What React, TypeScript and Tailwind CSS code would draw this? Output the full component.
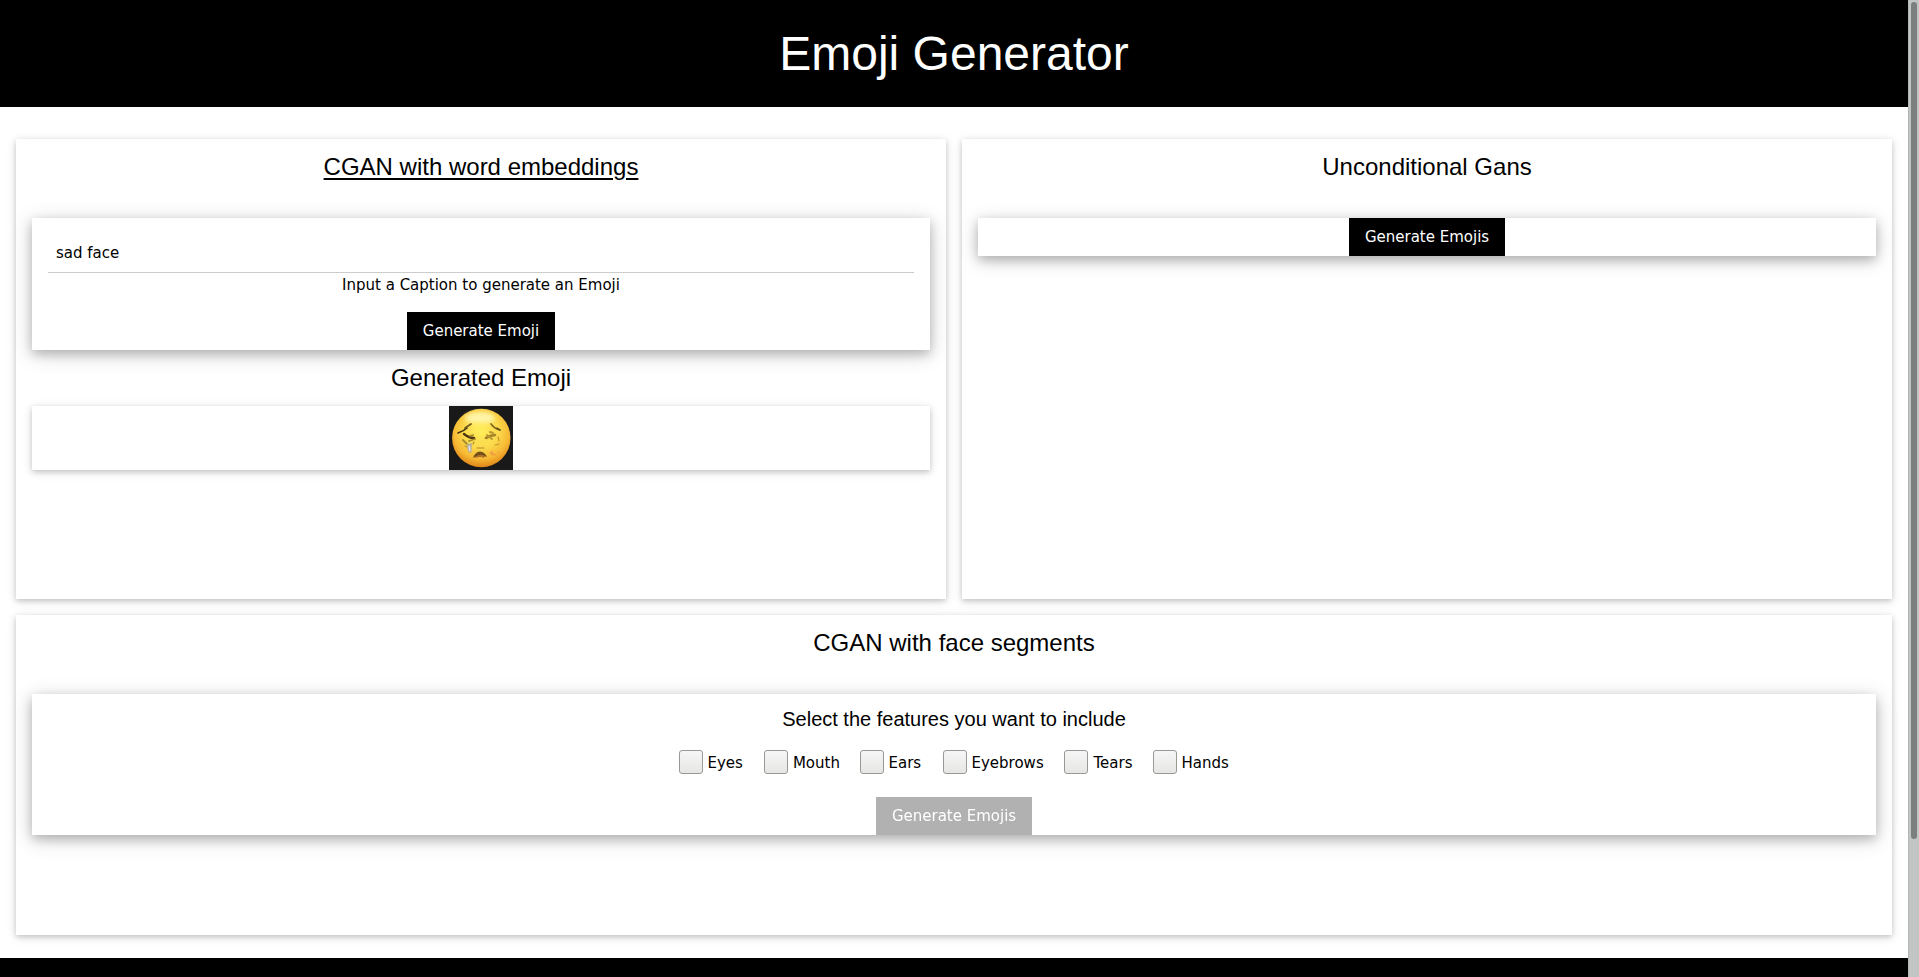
import React, { useState } from "react";

const FEATURES = [
  { name: "Eyes", layout: "w-[85px] gap-[5px]" },
  { name: "Mouth", layout: "w-[96px] gap-[5.4px]" },
  { name: "Ears", layout: "w-[83px] gap-[5px]" },
  { name: "Eyebrows", layout: "w-[121px] gap-[5px]" },
  { name: "Tears", layout: "w-[89px] gap-[6px]" },
  { name: "Hands", layout: "w-[77px] gap-[5px]" },
];

const CARD = "bg-white shadow-[0_2px_5px_0_rgba(0,0,0,0.16),0_2px_10px_0_rgba(0,0,0,0.12)]";
const RAISED = "bg-white shadow-[0_4px_10px_0_rgba(0,0,0,0.2),0_4px_20px_0_rgba(0,0,0,0.19)]";
const TITLE = "py-2.5 text-center font-['Liberation_Sans',sans-serif] text-2xl leading-9";

function ActionButton({ children, disabled = false }: { children: React.ReactNode; disabled?: boolean }) {
  return (
    <button
      disabled={disabled}
      className="block h-[38px] bg-black px-4 text-[15px] leading-[22px] text-white disabled:opacity-30"
    >
      {children}
    </button>
  );
}

function SadEmoji() {
  return (
    <svg width="64" height="64" viewBox="0 0 64 64" className="block">
      <defs>
        <radialGradient id="face" cx="50%" cy="38%" r="64%">
          <stop offset="0" stopColor="#fde65a" />
          <stop offset="0.45" stopColor="#fbdb4c" />
          <stop offset="0.75" stopColor="#f6b934" />
          <stop offset="1" stopColor="#dc7f14" />
        </radialGradient>
        <filter id="soft" x="-10%" y="-10%" width="120%" height="120%">
          <feGaussianBlur stdDeviation="0.65" />
        </filter>
        <filter id="glow" x="-30%" y="-50%" width="160%" height="200%">
          <feGaussianBlur stdDeviation="2" />
        </filter>
      </defs>
      <rect width="64" height="64" fill="#191919" />
      <circle cx="32.3" cy="32" r="29.2" fill="url(#face)" />
      <ellipse cx="31" cy="12" rx="15" ry="6" fill="#fff8b8" opacity="0.85" filter="url(#glow)" />
      <ellipse cx="31" cy="23" rx="8" ry="7" fill="#fff05a" opacity="0.6" filter="url(#glow)" />
      <g filter="url(#soft)">
        <g fill="none" strokeLinecap="round">
          <path d="M9 27Q15 25 18 22" stroke="#3f3212" strokeWidth="1.6" />
          <path d="M16 22L22 18" stroke="#6f5b20" strokeWidth="1.8" />
          <path d="M42 18Q46 23 51 24" stroke="#80651f" strokeWidth="1.7" />
          <path d="M48 22L51 24" stroke="#4e3c12" strokeWidth="1.2" />
          <path d="M15 28Q20 32 25 32" stroke="#4b3412" strokeWidth="2.4" />
          <path d="M14 34L18 38M20 35L26 33M21 30L24 29" stroke="#a58a2c" strokeWidth="1.8" />
          <path d="M37 32L41 30L46 29" stroke="#a5822b" strokeWidth="2.6" />
          <path d="M38 29L43 33M41 26L44 27" stroke="#b8972f" strokeWidth="2" />
          <path d="M28 42L35 42" stroke="#d0a535" strokeWidth="1.3" />
          <path d="M49 31L50 35M46 39L50 38" stroke="#cb942f" strokeWidth="1.2" />
          <path d="M41 47L47 49M43 45L43 49M49 46L50 47" stroke="#f09a45" strokeWidth="1.4" />
          <path d="M16 40L18 41M24 38L25 36" stroke="#b8922e" strokeWidth="1.3" />
        </g>
        <path d="M18 38L23 37L22.5 46Q20 48 18.5 44Z" fill="#b8b09a" />
        <path d="M19.5 40L21 40L21.5 45L20 45Z" fill="#dce1f6" />
        <path d="M24 52Q26 46 31 45.5Q36 46 38 51Q31 48 24 52Z" fill="#72501c" />
        <path d="M26 51Q31 47 36 50L35 52Q31 50 27 52Z" fill="#b0702b" />
      </g>
    </svg>
  );
}

export default function App() {
  const [caption, setCaption] = useState("sad face");

  return (
    <div className="flex h-[977px] overflow-hidden bg-white font-['DejaVu_Sans',sans-serif] text-[15px] leading-[22.5px] text-black">
      <div className="flex w-[1908px] flex-col">
        <header className="flex h-[107px] shrink-0 items-center justify-center bg-black">
          <h1 className="font-['Liberation_Sans',sans-serif] text-[48px] leading-[72px] text-white">Emoji Generator</h1>
        </header>

        <main className="grid h-[851px] shrink-0 grid-cols-2 grid-rows-[460px_320px] content-start gap-4 px-4 pt-8">
          <section className={`${CARD} px-4`}>
            <h3 className={`${TITLE} underline decoration-2 underline-offset-[3px]`}>CGAN with word embeddings</h3>
            <div className={`${RAISED} mt-[23px] flex h-[132px] flex-col items-center px-4 pt-[15px]`}>
              <input
                aria-label="Caption"
                value={caption}
                onChange={(e) => setCaption(e.target.value)}
                className="block h-10 w-full shrink-0 border-b border-[#ccc] p-2 outline-none"
              />
              <label className="mt-px mb-[15px] leading-[23px]">Input a Caption to generate an Emoji</label>
              <ActionButton>Generate Emoji</ActionButton>
            </div>
            <h3 className={TITLE}>Generated Emoji</h3>
            <div className={`${CARD} flex h-16 justify-center`}>
              <SadEmoji />
            </div>
          </section>

          <section className={`${CARD} px-4`}>
            <h3 className={TITLE}>Unconditional Gans</h3>
            <div className={`${RAISED} mt-[23px] flex justify-center`}>
              <ActionButton>Generate Emojis</ActionButton>
            </div>
          </section>

          <section className={`${CARD} col-span-2 px-4`}>
            <h3 className={TITLE}>CGAN with face segments</h3>
            <div className={`${RAISED} mt-[23px] flex h-[141px] flex-col items-center`}>
              <h4 className="py-2.5 font-['Liberation_Sans',sans-serif] text-xl leading-[30px]">
                Select the features you want to include
              </h4>
              <div className="mt-[6px] flex h-6 w-[551px]">
                {FEATURES.map(({ name, layout }) => (
                  <label key={name} className={`flex shrink-0 items-center ${layout}`}>
                    <input
                      type="checkbox"
                      className="size-6 shrink-0 appearance-none rounded-[3px] border border-[#989894] bg-linear-to-b from-[#f6f6f6] to-[#e6e6e5]"
                    />
                    <span className="pt-0.5 leading-[22px]">{name}</span>
                  </label>
                ))}
              </div>
              <div className="mt-[23px]">
                <ActionButton disabled>Generate Emojis</ActionButton>
              </div>
            </div>
          </section>
        </main>

        <footer className="grow bg-black" />
      </div>
      <div className="w-[11px] shrink-0 border-l border-[#b5b7b6] bg-[#c3c5c4] pt-0.5 pl-0.5">
        <div className="h-[837px] w-1.5 rounded-full bg-[#7b7f7e]" />
      </div>
    </div>
  );
}
